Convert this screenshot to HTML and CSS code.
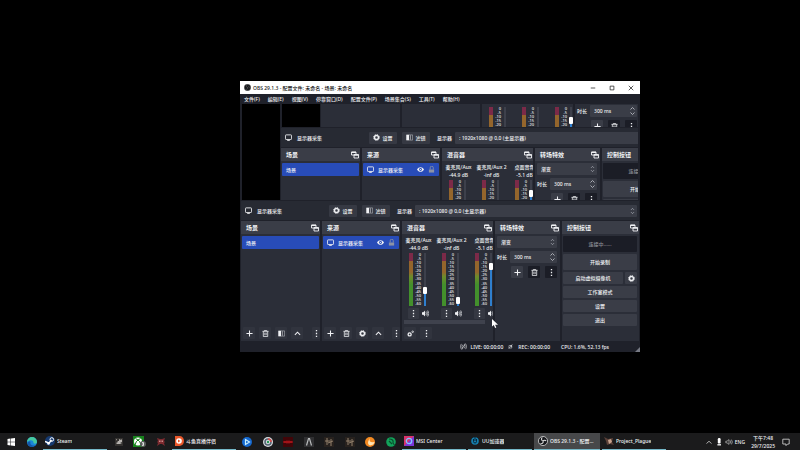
FILE: index.html
```html
<!DOCTYPE html>
<html lang="zh-CN">
<head>
    <meta charset="UTF-8">
    <meta name="viewport" content="width=device-width, initial-scale=1.0">
    <title>OBS 29.1.3</title>
    <link rel="stylesheet" href="styles.css">
</head>
<body>

    <!-- Icons -->
    <svg class="sprite" aria-hidden="true">
        <symbol id="i-plus" viewBox="0 0 16 16"><path d="M8 1v14M1 8h14" stroke="currentColor" stroke-width="2.4" fill="none"/></symbol>
        <symbol id="i-trash" viewBox="0 0 16 16"><path d="M1 3h14M5.500 3V1h5v2M3 3v12h10V3M6.500 6v6M9.500 6v6" stroke="currentColor" stroke-width="1.800" fill="none"/></symbol>
        <symbol id="i-filter" viewBox="0 0 16 16"><path d="M1 2h14v12H1z" fill="none" stroke="currentColor" stroke-width="1.500" opacity=".6"/><path d="M1 2h6v12H1z" fill="currentColor"/><path d="M9 3h2v10H9z" fill="currentColor" opacity=".6"/></symbol>
        <symbol id="i-up" viewBox="0 0 16 16"><path d="M2 11l6-6 6 6" stroke="currentColor" stroke-width="2.400" fill="none"/></symbol>
        <symbol id="i-dots" viewBox="0 0 16 16"><path d="M6.500 0h3v3h-3zM6.500 6.500h3v3h-3zM6.500 13h3v3h-3z" fill="currentColor"/></symbol>
        <symbol id="i-gear" viewBox="0 0 16 16"><circle cx="8" cy="8" r="4.600" fill="none" stroke="currentColor" stroke-width="3.400"/><circle cx="8" cy="8" r="6.800" fill="none" stroke="currentColor" stroke-width="2" stroke-dasharray="2.700 2.640"/></symbol>
        <symbol id="i-gears" viewBox="0 0 16 16"><circle cx="6" cy="10" r="3.500" fill="none" stroke="currentColor" stroke-width="3"/><circle cx="13" cy="4" r="1.800" fill="none" stroke="currentColor" stroke-width="1.800"/></symbol>
        <symbol id="i-monitor" viewBox="0 0 16 16"><rect x="1" y="2" width="14" height="10.500" rx="1.500" fill="none" stroke="currentColor" stroke-width="2"/><path d="M5 15h6" stroke="currentColor" stroke-width="2"/></symbol>
        <symbol id="i-eye" viewBox="0 0 16 16"><path d="M0 8c4-7 12-7 16 0-4 7-12 7-16 0z" fill="currentColor"/><circle cx="8" cy="8" r="3.200" fill="#284cb8"/><circle cx="8" cy="8" r="1.400" fill="currentColor"/></symbol>
        <symbol id="i-lock" viewBox="0 0 16 16"><path d="M5 8V4a3.500 3.500 0 0 1 7 0v4" fill="none" stroke="#8d93a5" stroke-width="2"/><path d="M2 8h12v7H2z" fill="#8d93a5"/></symbol>
        <symbol id="i-dock" viewBox="0 0 16 16"><path d="M1 2h9v6H1z" fill="none" stroke="currentColor" stroke-width="1.800"/><path d="M6 7h9v7H6z" fill="#3a3d47" stroke="currentColor" stroke-width="1.800"/><path d="M1 2.500h9M6 8h9" stroke="currentColor" stroke-width="2.500"/></symbol>
        <symbol id="i-sound" viewBox="0 0 16 16"><path d="M0 5h3l4-4v14l-4-4H0z" fill="currentColor"/><path d="M9 5q2 3 0 6M11 3q4 5 0 10M13 1q6 7 0 14" stroke="currentColor" stroke-width="1.500" fill="none"/></symbol>
        <symbol id="i-spin" viewBox="0 0 16 16"><path d="M4 5l4-4 4 4M4 11l4 4 4-4" stroke="currentColor" stroke-width="1.800" fill="none"/></symbol>
        <symbol id="i-live" viewBox="0 0 16 16"><path d="M3 2q-4 6 0 12M6 4q-3 4 0 8M13 2q4 6 0 12M10 4q3 4 0 8M4 15L12 1" stroke="currentColor" stroke-width="1.300" fill="none"/></symbol>
        <symbol id="i-rec" viewBox="0 0 16 16"><path d="M3 5h9v8H3zM2 15L14 1" stroke="currentColor" stroke-width="1.500" fill="none"/><path d="M7 5h5v5z" fill="currentColor"/></symbol>
        <symbol id="i-obs" viewBox="0 0 16 16"><circle cx="8" cy="8" r="7.300" fill="#17181c" stroke="currentColor" stroke-width="1.200"/><path d="M7 2.500a3 3 0 0 0 1 5.500M13 8a3 3 0 0 0-5 0M4 12a3 3 0 0 0 4-4" fill="none" stroke="currentColor" stroke-width="1.700"/></symbol>
    </svg>

    <main class="desktop">
        <section class="window">
            <header class="titlebar">
                <svg class="icon"><use href="#i-obs"/></svg>
                <h1>OBS 29.1.3 - 配置文件: 未命名 - 场景: 未命名</h1>
                <div class="window-buttons">
                    <button aria-label="最小化"><svg viewBox="0 0 8 8"><path d="M1 4h6"/></svg></button>
                    <button aria-label="最大化"><svg viewBox="0 0 8 8"><path d="M1.500 1.500h5v5h-5z"/></svg></button>
                    <button aria-label="关闭"><svg viewBox="0 0 8 8"><path d="M1 1l6 6M7 1L1 7"/></svg></button>
                </div>
            </header>

            <nav class="menubar">
                <button>文件(F)</button>
                <button>编辑(E)</button>
                <button>视图(V)</button>
                <button>停靠窗口(D)</button>
                <button>配置文件(P)</button>
                <button>场景集合(S)</button>
                <button>工具(T)</button>
                <button>帮助(H)</button>
            </nav>

            <div class="studio">
                <div class="preview"></div>

                <div class="sourcebar">
                    <svg class="icon"><use href="#i-monitor"/></svg>
                    <span class="source-name">显示器采集</span>
                    <button class="btn"><svg class="icon"><use href="#i-gear"/></svg>设置</button>
                    <button class="btn"><svg class="icon"><use href="#i-filter"/></svg>滤镜</button>
                    <label class="field">
                        <span>显示器</span>
                        <span class="combo">
                            <select><option>: 1920x1080 @ 0,0 (主显示器)</option></select>
                            <svg class="spin"><use href="#i-spin"/></svg>
                        </span>
                    </label>
                </div>

                <div class="docks">
                    <section class="dock">
                        <h2>场景<svg class="icon"><use href="#i-dock"/></svg></h2>
                        <ul class="list">
                            <li>场景</li>
                        </ul>
                        <div class="toolbar">
                            <button aria-label="添加"><svg class="icon"><use href="#i-plus"/></svg></button>
                            <button aria-label="删除"><svg class="icon"><use href="#i-trash"/></svg></button>
                            <button aria-label="滤镜"><svg class="icon"><use href="#i-filter"/></svg></button>
                            <button aria-label="上移"><svg class="icon"><use href="#i-up"/></svg></button>
                            <button class="narrow" aria-label="更多"><svg class="icon"><use href="#i-dots"/></svg></button>
                        </div>
                    </section>

                    <section class="dock">
                        <h2>来源<svg class="icon"><use href="#i-dock"/></svg></h2>
                        <ul class="list">
                            <li>
                                <svg class="icon"><use href="#i-monitor"/></svg>
                                <span class="item-name">显示器采集</span>
                                <svg class="icon"><use href="#i-eye"/></svg>
                                <svg class="icon"><use href="#i-lock"/></svg>
                            </li>
                        </ul>
                        <div class="toolbar">
                            <button aria-label="添加"><svg class="icon"><use href="#i-plus"/></svg></button>
                            <button aria-label="删除"><svg class="icon"><use href="#i-trash"/></svg></button>
                            <button aria-label="属性"><svg class="icon"><use href="#i-gear"/></svg></button>
                            <button aria-label="上移"><svg class="icon"><use href="#i-up"/></svg></button>
                            <button class="narrow" aria-label="更多"><svg class="icon"><use href="#i-dots"/></svg></button>
                        </div>
                    </section>

                    <section class="dock">
                        <h2>混音器<svg class="icon"><use href="#i-dock"/></svg></h2>
                        <div class="mixer"></div>
                        <div class="scrollbar"></div>
                        <div class="toolbar">
                            <button aria-label="高级音频属性"><svg class="icon"><use href="#i-gears"/></svg></button>
                            <button aria-label="更多"><svg class="icon"><use href="#i-dots"/></svg></button>
                        </div>
                    </section>

                    <section class="dock">
                        <h2>转场特效<svg class="icon"><use href="#i-dock"/></svg></h2>
                        <div class="transitions">
                            <span class="combo">
                                <select aria-label="转场特效"><option>渐变</option></select>
                                <svg class="spin"><use href="#i-spin"/></svg>
                            </span>
                            <label class="field">
                                <span>时长</span>
                                <span class="combo plain">
                                    <input type="text" value="300 ms">
                                    <svg class="spin"><use href="#i-spin"/></svg>
                                </span>
                            </label>
                            <div class="transition-buttons">
                                <button aria-label="添加"><svg class="icon"><use href="#i-plus"/></svg></button>
                                <button class="dark" aria-label="删除"><svg class="icon"><use href="#i-trash"/></svg></button>
                                <button class="dark" aria-label="更多"><svg class="icon"><use href="#i-dots"/></svg></button>
                            </div>
                        </div>
                    </section>

                    <section class="dock">
                        <h2>控制按钮<svg class="icon"><use href="#i-dock"/></svg></h2>
                        <div class="controls">
                            <button class="tall" disabled>连接中......</button>
                            <button class="tall">开始录制</button>
                            <div class="split">
                                <button>启动虚拟摄像机</button>
                                <button aria-label="虚拟摄像机设置"><svg class="icon"><use href="#i-gear"/></svg></button>
                            </div>
                            <button>工作室模式</button>
                            <button>设置</button>
                            <button>退出</button>
                        </div>
                    </section>
                </div>
            </div>

            <footer class="statusbar">
                <svg class="icon"><use href="#i-live"/></svg>
                <span>LIVE: 00:00:00</span>
                <svg class="icon small"><use href="#i-rec"/></svg>
                <span>REC: 00:00:00</span>
                <span class="cpu">CPU: 1.6%, 52.13 fps</span>
                <svg class="grip" viewBox="0 0 6 6"><path d="M6 0v6H0z"/></svg>
            </footer>

            <svg class="cursor" viewBox="0 0 6 9"><path d="M0 0v7.500l1.800-1.500 1.300 3 1.200-.6-1.200-2.700H6z"/></svg>
        </section>
    </main>

    <footer class="taskbar">
        <div class="pins pins-2">
            <button aria-label="开始"><svg viewBox="0 0 10 10"><path d="M1.500 2l3-.5v3.300h-3zM5 1.400L9 1v3.800H5zM1.500 5.200h3v3.300l-3-.5zM5 5.200h4V9l-4-.4z" fill="#fff"/></svg></button>
            <button aria-label="Edge"><svg viewBox="0 0 10 10"><circle cx="5" cy="5" r="5" fill="#1a86d8"/><path d="M0 5a5 5 0 0 1 10 0c0 2-3 2-3.500 1C7 3 3 2 0 5z" fill="#46c9a0"/><path d="M3.500 5c-1 3 2 4.500 5 3-2 3-7 2.500-8-1 0-2 1.500-3 3-2z" fill="#1458a8"/></svg></button>
        </div>
        <button class="app"><svg viewBox="0 0 10 10"><circle cx="5" cy="5" r="5" fill="#163a70"/><path d="M0 5.500l4 1.700L6.500 4" stroke="#fff" stroke-width="1.500" fill="none"/><circle cx="6.800" cy="3.500" r="1.800" fill="none" stroke="#fff"/><circle cx="3.500" cy="7.500" r="1.300" fill="#fff"/></svg><span>Steam</span></button>
        <div class="pins pins-3">
            <button aria-label="游戏"><svg viewBox="0 0 10 10"><path d="M1 1h8v8H1z" fill="#33312f"/><path d="M2 2h1v2h2V2l2 1 1-1v3L6 6l2 1H3L2 6l2-1z" fill="#b5b2ae"/></svg></button>
            <button class="wide" aria-label="Xbox"><svg viewBox="0 0 13 11"><path d="M0 0h11v11H0z" fill="#18831d"/><circle cx="5" cy="5.500" r="4" fill="#fff"/><path d="M2 9q1-4 3-5Q7 5 8 9M2.500 2.500l2.500 1.500 2.500-1.500" stroke="#18831d" fill="none"/><circle cx="10" cy="8" r="3" fill="#5a5c5c"/><path d="M9 6.500h1.500v1.500H9.500H10.500V9.500H9" stroke="#fff" stroke-width=".7" fill="none"/></svg></button>
            <button aria-label="游戏"><svg viewBox="0 0 10 10"><path d="M1 1l3 1h2l3-1-1 3 1 1-1 1 1 3-3-2H4L1 9l1-3-1-1 1-1z" fill="#7d2b30"/><path d="M3 3.500h1.500V5H3zM5.500 3.500H7V5H5.500z" fill="#c98a88"/></svg></button>
        </div>
        <button class="app"><svg viewBox="0 0 10 10"><path d="M1 0h4.500a4.500 5 0 0 1 0 10H1z" fill="#e8572a"/><circle cx="5" cy="5" r="2.800" fill="#fff"/><path d="M4 3.500L6.500 5 4 6.500z" fill="#e8572a"/></svg><span>斗鱼直播伴侣</span></button>
        <div class="pins pins-8">
            <button aria-label="战网"><svg viewBox="0 0 10 10"><circle cx="5" cy="5" r="5" fill="#1568cf"/><path d="M3.500 2.500L7.500 5 3.500 7.500z" fill="none" stroke="#c8efff" stroke-width="1.200"/></svg></button>
            <button aria-label="浏览器"><svg viewBox="0 0 10 10"><circle cx="5" cy="5" r="5" fill="#d9dcdf"/><circle cx="5" cy="5" r="3" fill="none" stroke="#536272" stroke-width="1.500"/><path d="M5 2a3 3 0 0 1 3 3" stroke="#d64b49" stroke-width="1.500" fill="none"/><circle cx="5" cy="5" r="1.200" fill="#269657"/></svg></button>
            <button aria-label="游戏"><svg viewBox="0 0 10 10"><path d="M0 0h10v10H0z" fill="#420508"/><path d="M0 5h10M2 4v2M4 3.500v3M6 3.500v3M8 4v2" stroke="#d81c25" stroke-width=".8"/></svg></button>
            <button aria-label="Apex"><svg viewBox="0 0 10 10"><path d="M0 0h10v10H0z" fill="#303032"/><path d="M2.500 8.500l2-7h1l2 7" stroke="#b9bbbc" stroke-width="1.200" fill="none"/></svg></button>
            <button aria-label="游戏"><svg viewBox="0 0 10 10"><path d="M0 0h10v10H0z" fill="#28221e"/><path d="M3 1v7M7 2v7M1 4h5M4 6l5-2" stroke="#93816c" fill="none"/></svg></button>
            <button aria-label="游戏"><svg viewBox="0 0 10 10"><path d="M0 0h10v10H0z" fill="#28221e"/><path d="M3 1v7M7 2v7M1 4h5M4 6l5-2" stroke="#93816c" fill="none"/></svg></button>
            <button aria-label="加速器"><svg viewBox="0 0 10 10"><circle cx="5" cy="5" r="5" fill="#f38a22"/><path d="M5 1Q3 6 9.500 5 9 8 5 8.500 1 7 5 1z" fill="#ffe5b4"/></svg></button>
            <button aria-label="工具"><svg viewBox="0 0 10 10"><circle cx="5" cy="5" r="4.800" fill="#12a35a"/><path d="M3 2q5 0 4 4L9 9M3 4l3 3" stroke="#0a4e2e" stroke-width="1.200" fill="none"/></svg></button>
        </div>
        <button class="app"><svg viewBox="0 0 10 10"><path d="M0 0h10v10H0z" fill="#7a35d8"/><path d="M0 0h10L0 10z" fill="#d9336b"/><circle cx="5" cy="5" r="2.700" fill="none" stroke="#7fc4ff" stroke-width="1.300"/></svg><span>MSI Center</span></button>
        <button class="app"><svg viewBox="0 0 10 10"><circle cx="5" cy="5" r="3.800" fill="#157fae"/><path d="M3.500 3v2.500a1.500 1.500 0 0 0 3 0V3M5 1v4" stroke="#0a2738" fill="none"/></svg><span>UU加速器</span></button>
        <button class="app active"><svg class="light"><use href="#i-obs"/></svg><span>OBS 29.1.3 - 配置文件</span></button>
        <button class="app"><svg viewBox="0 0 10 10"><path d="M0 1l4 2 5-1-1 4 2 3-4-1-3 1-1-4z" fill="#5a4038"/><path d="M4 4l3-1 1 3-3 2z" fill="#c9a48f"/></svg><span>Project_Plague</span></button>

        <div class="tray">
            <svg viewBox="0 0 10 10"><path d="M2 7l3-3 3 3" stroke="#ddd" fill="none"/></svg>
            <svg viewBox="0 0 10 10"><rect x="3.500" y="0" width="3.500" height="7" rx="1.500" fill="#fff"/><path d="M3 8.500h4.500" stroke="#fff" stroke-width="1.600"/></svg>
            <svg viewBox="0 0 10 10"><path d="M1 4h1.500L5 2v6L2.500 6H1zM6.500 3q1.500 2 0 4M8 2q2.500 3 0 6" stroke="#ccc" fill="none" stroke-width=".8"/></svg>
            <span>ENG</span>
            <time>下午7:48<br>29/7/2025</time>
            <svg viewBox="0 0 10 10"><path d="M1 1.500h8v6H7L5 9.500v-2H1z" stroke="#ddd" fill="none"/></svg>
        </div>
    </footer>

    <script>
        const channels = [
            { name: '麦克风/Aux', db: '-44.9 dB', level: 27 },
            { name: '麦克风/Aux 2', db: '-inf dB', level: 4 },
            { name: '桌面音频', db: '-5.1 dB', level: 79 }
        ];

        const studio = document.querySelector('.studio');
        const mixer = document.querySelector('.mixer');

        let scale = '';
        for (let db = 0; db >= -60; db -= 5) {
            scale += `<li>${db}</li>`;
        }

        channels.forEach(channel => {
            const strip = document.createElement('div');
            strip.className = 'strip';
            strip.innerHTML = `
                <div class="strip-name">${channel.name}</div>
                <div class="strip-db">${channel.db}</div>
                <div class="strip-body">
                    <div class="meter"></div>
                    <ul class="scale">${scale}</ul>
                    <input class="fader" type="range" aria-label="${channel.name}" value="${channel.level}" style="--level: ${channel.level}%">
                </div>
                <div class="strip-buttons">
                    <button aria-label="更多"><svg class="icon"><use href="#i-dots"/></svg></button>
                    <button class="mute" aria-label="静音"><svg class="icon"><use href="#i-sound"/></svg></button>
                </div>`;
            mixer.appendChild(strip);
        });

        // The display capture shows the window inside its own preview
        function capture(depth) {
            const copy = studio.cloneNode(true);
            copy.classList.add('capture');
            copy.inert = true;
            if (depth > 1) {
                copy.querySelector('.preview').appendChild(capture(depth - 1));
            }
            return copy;
        }

        studio.querySelector('.preview').appendChild(capture(2));
    </script>

</body>
</html>
```

FILE: styles.css
```css
* {
    margin: 0;
    padding: 0;
    box-sizing: border-box;
}

body {
    min-height: 100vh;
    display: flex;
    flex-direction: column;
    background-color: #000;
    color: #f0f1f4;
    font-family: "Noto Sans", "Noto Sans CJK SC", sans-serif;
    font-size: 5px;
    font-weight: 500;
    line-height: 8px;
}

button,
input,
select {
    border: 0;
    background: none;
    color: inherit;
    font: inherit;
    appearance: none;
}

button {
    display: flex;
    align-items: center;
    justify-content: center;
    white-space: nowrap;
}

ul {
    list-style: none;
}

svg {
    display: block;
    flex: none;
}

.sprite {
    position: absolute;
    width: 0;
    height: 0;
}

.icon {
    width: 7px;
    height: 7px;
}

/* Window */

.desktop {
    flex: 1;
    padding-top: 81px;
}

.window {
    position: relative;
    width: 50%;
    min-width: 400px;
    margin-left: 30%;
    background-color: #1f212a;
}

.titlebar {
    display: flex;
    align-items: center;
    height: 13px;
    padding-left: 4px;
    background-color: #fff;
    color: #111;
}

.titlebar .icon {
    color: #555;
}

.titlebar h1 {
    flex: 1;
    margin-left: 2px;
    font-size: 5px;
    font-weight: 500;
}

.window-buttons {
    display: flex;
}

.window-buttons button {
    width: 19px;
    height: 13px;
}

.window-buttons svg {
    width: 6px;
    height: 6px;
    fill: none;
    stroke: #222;
}

.menubar {
    display: flex;
    gap: 8px;
    height: 10px;
    padding-left: 4px;
}

/* Preview and the docks under it */

.studio {
    padding: 0 1px;
    background-color: #1f212a;
}

.preview {
    position: relative;
    height: 96px;
    margin: 0 1px;
    overflow: hidden;
    background-color: #000;
}

.capture {
    position: absolute;
    top: -73px;
    left: 38px;
    width: calc(100% + 4px);
}

.sourcebar {
    display: flex;
    align-items: center;
    gap: 5px;
    height: 19px;
    margin: 1px 0;
    padding: 0 2px 0 4px;
    background-color: #272a33;
}

.source-name {
    width: 67px;
}

.btn {
    gap: 2px;
    width: 28px;
    height: 12px;
    border-radius: 1px;
    background-color: #363943;
}

.field {
    flex: 1;
    display: flex;
    align-items: center;
    gap: 3px;
    white-space: nowrap;
}

.sourcebar .field {
    padding-left: 2px;
}

.combo {
    flex: 1;
    display: flex;
    align-items: center;
    min-width: 0;
    height: 12px;
    border-radius: 1px;
    background-color: #3a3d47;
}

.combo select,
.combo input {
    flex: 1;
    width: 0;
    min-width: 0;
    height: 12px;
    padding-left: 4px;
}

.spin {
    width: 9px;
    height: 6px;
    color: #b5b8c0;
}

.combo.plain .spin {
    height: 8px;
}

.docks {
    display: grid;
    grid-template-columns: 79fr 78fr 91fr 65fr 77fr;
    gap: 2px;
    height: 120px;
}

.dock {
    display: flex;
    flex-direction: column;
    min-width: 0;
    overflow: hidden;
    background-color: #2b2e38;
}

.dock h2 {
    display: flex;
    align-items: center;
    justify-content: space-between;
    height: 13px;
    padding: 0 1px 0 5px;
    background-color: #3a3d47;
    font-size: 6px;
    font-weight: 700;
}

.dock h2 .icon {
    width: 8px;
    height: 8px;
}

.list {
    flex: 1;
    padding: 2px 1px;
}

.list li {
    display: flex;
    align-items: center;
    gap: 4px;
    height: 13px;
    padding: 0 4px;
    border-radius: 1px;
    background-color: #284cb8;
    white-space: nowrap;
}

.item-name {
    flex: 1;
}

.toolbar {
    display: flex;
    gap: 4px;
    padding: 0 0 2px 2px;
}

.toolbar button {
    width: 12px;
    height: 12px;
    border-radius: 1px;
    background-color: #31343e;
}

.toolbar .narrow {
    width: 8px;
    margin-left: auto;
}

/* Mixer */

.mixer {
    flex: 1;
    display: flex;
    padding-top: 2px;
}

.strip {
    flex: none;
    width: 33px;
    text-align: center;
    white-space: nowrap;
}

.strip-body {
    display: flex;
    height: 54px;
    padding: 1px 0 0 7px;
}

.meter {
    width: 4px;
    background: linear-gradient(to right, transparent 40%, #2b2e38 40% 60%, transparent 60%),
        linear-gradient(to bottom, #7c2a48 16%, #94652c 16% 36%, #6f8a2b 44%, #43902c 60%);
}

.scale {
    display: flex;
    flex-direction: column;
    justify-content: space-between;
    width: 8px;
    font-size: 4px;
    line-height: 4px;
    text-align: right;
}

.fader {
    writing-mode: vertical-lr;
    direction: rtl;
    width: 4px;
    height: 53px;
    margin-left: 2px;
    background: linear-gradient(to top, #2f7fce var(--level), #3d404b var(--level)) center / 2px 100% no-repeat;
}

.fader::-webkit-slider-thumb {
    appearance: none;
    width: 4px;
    height: 7px;
    border-radius: 1px;
    background-color: #fff;
}

.strip-buttons {
    display: flex;
    gap: 1px;
    padding: 2px 0 0 6px;
}

.strip-buttons button {
    width: 11px;
    height: 11px;
    border-radius: 1px;
    background-color: #353842;
}

.strip-buttons .mute {
    background: none;
}

.scrollbar {
    width: 81px;
    height: 4px;
    margin: 0 0 3px 2px;
    background-color: #3f424d;
}

/* Transitions */

.transitions {
    display: flex;
    flex-direction: column;
    gap: 3px;
    padding: 2px 3px 0 2px;
}

.transitions .combo,
.transitions .field {
    flex: none;
}

.transitions .field .combo {
    flex: 1;
}

.transition-buttons {
    display: flex;
    justify-content: space-between;
    padding: 0 0 0 14px;
}

.transition-buttons button {
    width: 12px;
    height: 12px;
    border-radius: 1px;
    background-color: #3a3d47;
}

.transition-buttons .dark {
    background-color: #1b1d26;
}

/* Controls */

.controls {
    display: flex;
    flex-direction: column;
    gap: 2px;
    padding: 2px 2px 0 1px;
}

.controls button {
    height: 12px;
    border-radius: 1px;
    background-color: #3a3d47;
}

.controls .tall {
    height: 16px;
}

.controls button:disabled {
    background-color: #1b1d26;
    color: #8b8d95;
}

.split {
    display: grid;
    grid-template-columns: 1fr 12px;
    gap: 2px;
}

.statusbar {
    display: flex;
    align-items: center;
    gap: 3px;
    height: 11px;
}

.statusbar .icon:first-child {
    margin-left: auto;
}

.statusbar .small {
    width: 5px;
    height: 5px;
    margin: 0 2px;
}

.cpu {
    margin-left: 8px;
}

.grip {
    align-self: flex-end;
    width: 5px;
    height: 5px;
    margin-left: 23px;
    fill: #777a84;
}

.cursor {
    position: absolute;
    top: 238px;
    left: 252px;
    width: 6px;
    height: 9px;
    fill: #fff;
}

/* Taskbar */

.taskbar {
    display: flex;
    height: 17px;
    background-color: #1b1b1c;
}

.taskbar svg {
    width: 10px;
    height: 10px;
}

.pins {
    display: flex;
}

.pins button {
    flex: 1;
}

.pins .wide svg {
    width: 13px;
    height: 11px;
}

.pins-2 {
    width: 42px;
}

.pins-3 {
    width: 63px;
}

.pins-8 {
    width: 164px;
}

.app {
    justify-content: flex-start;
    gap: 2px;
    width: 64px;
    height: 17px;
    margin: 0 1px;
    padding: 0 2px;
    border-bottom: 1px solid #76b9c9;
}

.app span {
    overflow: hidden;
    text-overflow: ellipsis;
}

.app.active {
    width: 66px;
    padding-left: 4px;
    background-color: #47484a;
}

.light {
    color: #ddd;
}

.tray {
    display: flex;
    align-items: center;
    gap: 2px;
    margin-left: auto;
    padding-right: 10px;
}

.tray svg {
    width: 8px;
    height: 8px;
}

.tray time {
    margin: 0 5px 0 4px;
    text-align: center;
}
```
